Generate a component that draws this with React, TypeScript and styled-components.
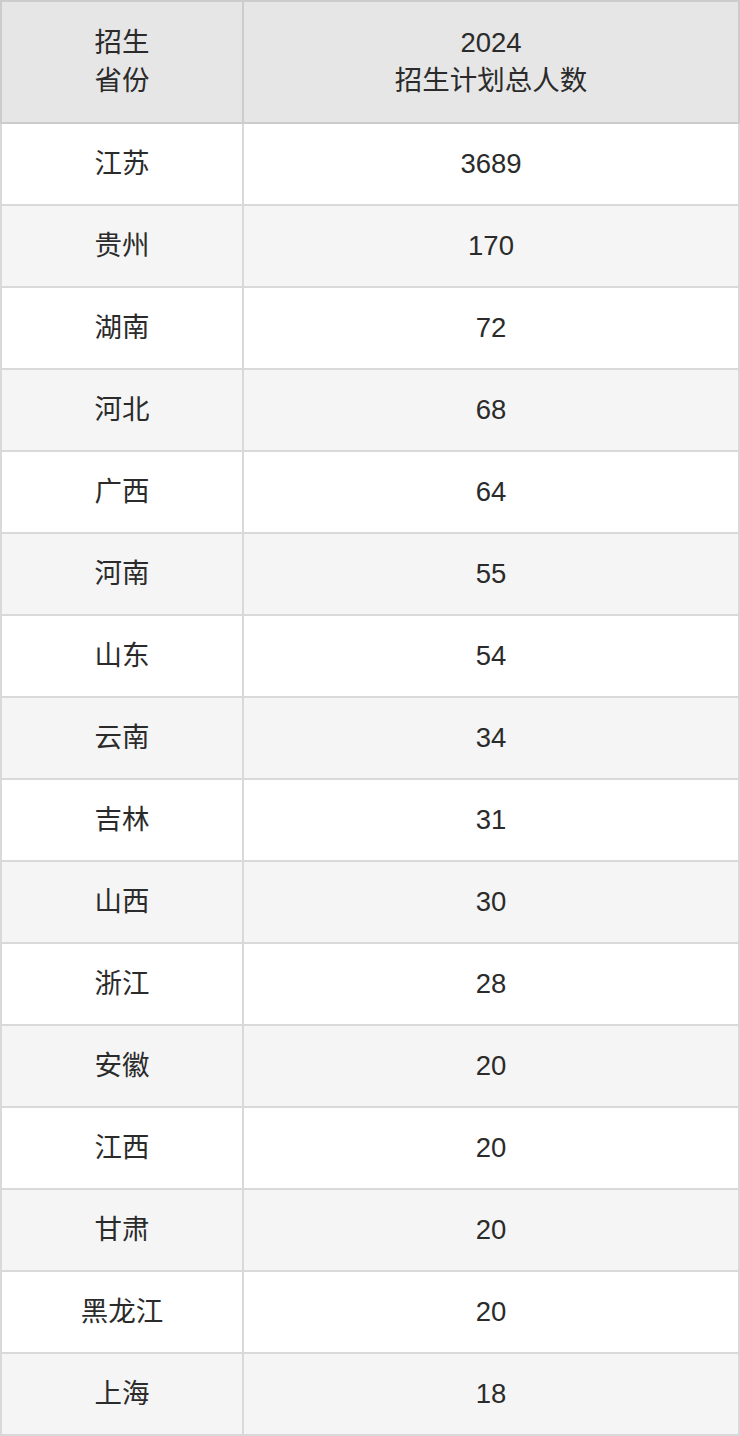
import styled, { createGlobalStyle } from "styled-components";

const GlobalStyle = createGlobalStyle`
  html, body {
    margin: 0;
    padding: 0;
    background: #ffffff;
  }
  body {
    font-family: "Liberation Sans", Arial, "Noto Sans CJK SC", sans-serif;
  }
`;

const Table = styled.table`
  width: 740px;
  border-collapse: collapse;
  table-layout: fixed;
  color: #2b2b2b;
  font-size: 27.5px;
  line-height: 38px;
`;

const HeadCell = styled.th`
  height: 120px;
  padding: 0;
  border: 2px solid #cccccc;
  background: #e6e6e6;
  font-weight: 400;
  text-align: center;
  vertical-align: middle;
`;

const Row = styled.tr<{ $striped: boolean }>`
  background: ${(p) => (p.$striped ? "#f5f5f5" : "#ffffff")};
`;

const Cell = styled.td`
  height: 80px;
  padding: 0;
  border: 2px solid #d9d9d9;
  text-align: center;
  vertical-align: middle;
`;

const rows: [string, string][] = [
  ["江苏", "3689"],
  ["贵州", "170"],
  ["湖南", "72"],
  ["河北", "68"],
  ["广西", "64"],
  ["河南", "55"],
  ["山东", "54"],
  ["云南", "34"],
  ["吉林", "31"],
  ["山西", "30"],
  ["浙江", "28"],
  ["安徽", "20"],
  ["江西", "20"],
  ["甘肃", "20"],
  ["黑龙江", "20"],
  ["上海", "18"],
];

const App = () => {
  return (
    <>
      <GlobalStyle />
      <Table>
        <colgroup>
          <col style={{ width: 242 }} />
          <col />
        </colgroup>
        <thead>
          <tr>
            <HeadCell>
              招生
              <br />
              省份
            </HeadCell>
            <HeadCell>
              2024
              <br />
              招生计划总人数
            </HeadCell>
          </tr>
        </thead>
        <tbody>
          {rows.map(([province, count], i) => (
            <Row key={province} $striped={i % 2 === 1}>
              <Cell>{province}</Cell>
              <Cell>{count}</Cell>
            </Row>
          ))}
        </tbody>
      </Table>
    </>
  );
};

export default App;
